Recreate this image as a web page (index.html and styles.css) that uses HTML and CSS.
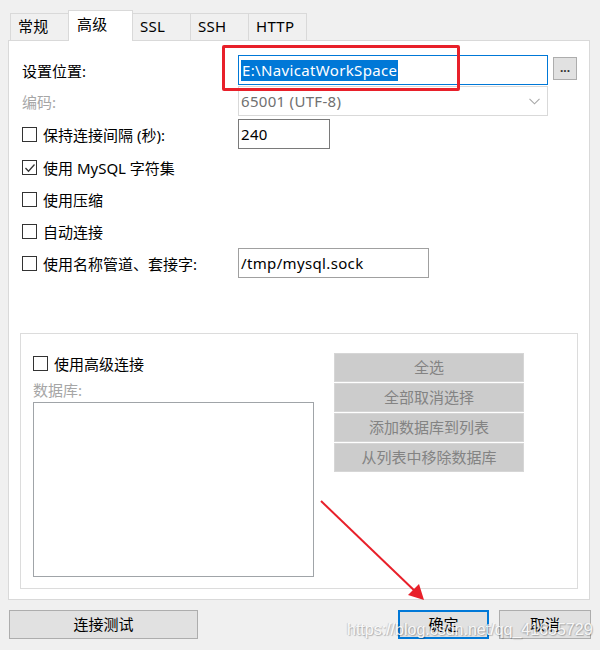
FILE: index.html
```html
<!DOCTYPE html>
<html lang="zh-CN">
<head>
<meta charset="utf-8">
<title>Navicat 连接属性</title>
<link rel="stylesheet" href="styles.css">
</head>
<body>
<div class="dialog">
  <div class="tabs">
    <div class="tab">常规</div>
    <div class="tab active">高级</div>
    <div class="tab">SSL</div>
    <div class="tab">SSH</div>
    <div class="tab">HTTP</div>
  </div>
  <div class="panel">
    <div class="form">
      <div class="label">设置位置:</div>
      <div class="ctrl">
        <div class="field path"><span class="sel">E:\NavicatWorkSpace</span></div>
        <div class="browse">...</div>
      </div>

      <div class="label disabled">编码:</div>
      <div class="ctrl">
        <div class="select">65001 (UTF-8)
          <svg class="chev" width="11" height="7" viewBox="0 0 11 7"><polyline points="0.5,0.8 5.5,5.8 10.5,0.8" fill="none" stroke="#a8a8a8" stroke-width="1.1"/></svg>
        </div>
      </div>

      <div class="check"><span class="box"></span><span>保持连接间隔 (秒):</span></div>
      <div class="ctrl"><div class="field num">240</div></div>

      <div class="check wide"><span class="box"><svg width="12" height="12" viewBox="0 0 12 12"><polyline points="1.5,6 4.5,9.2 10.5,2.5" fill="none" stroke="#333" stroke-width="1.3"/></svg></span><span>使用 MySQL 字符集</span></div>

      <div class="check wide"><span class="box"></span><span>使用压缩</span></div>

      <div class="check wide"><span class="box"></span><span>自动连接</span></div>

      <div class="check"><span class="box"></span><span>使用名称管道、套接字:</span></div>
      <div class="ctrl"><div class="field sock">/tmp/mysql.sock</div></div>
    </div>

    <div class="group">
      <div class="group-left">
        <div class="check adv"><span class="box"></span><span>使用高级连接</span></div>
        <div class="db-label">数据库:</div>
        <div class="listbox"></div>
      </div>
      <div class="group-right">
        <div class="gbtn">全选</div>
        <div class="gbtn">全部取消选择</div>
        <div class="gbtn">添加数据库到列表</div>
        <div class="gbtn">从列表中移除数据库</div>
      </div>
    </div>
  </div>
  <div class="footer">
    <div class="btn test">连接测试</div>
    <div class="footer-right">
      <div class="btn ok">确定</div>
      <div class="btn cancel">取消</div>
    </div>
  </div>
</div>

<div class="annot-box"></div>
<svg class="annot-arrow" width="600" height="650" viewBox="0 0 600 650">
  <line x1="321" y1="501" x2="418" y2="594" stroke="#e8202a" stroke-width="2"/>
  <polygon points="424,600 408,595 419,584" fill="#e8202a"/>
</svg>
<div class="watermark">https://blog.csdn.net/qq_41655729</div>
</body>
</html>
```

FILE: styles.css
```css
html, body {
  margin: 0;
  padding: 0;
}
body {
  width: 600px;
  height: 650px;
  background: #f0f0f0;
  font-family: "Noto Sans", "Noto Sans CJK SC", sans-serif;
  font-size: 15px;
  color: #000;
  position: relative;
  overflow: hidden;
}

.tabs {
  display: flex;
  align-items: flex-start;
  padding: 13px 0 0 10px;
  height: 27px;
}
.tab {
  box-sizing: border-box;
  width: 59px;
  height: 27px;
  margin-right: -1px;
  border: 1px solid #d9d9d9;
  border-bottom: none;
  background: #f0f0f0;
  padding-left: 7px;
  line-height: 25px;
  white-space: nowrap;
  letter-spacing: 0.3px;
}
.tab.active {
  position: relative;
  z-index: 2;
  width: 65px;
  height: 31px;
  margin-top: -3px;
  background: #fff;
  padding-left: 8px;
  line-height: 26px;
}

.panel {
  box-sizing: border-box;
  margin-left: 8px;
  width: 582px;
  height: 560px;
  border: 1px solid #d9d9d9;
  background: #fff;
}

.form {
  display: grid;
  grid-template-columns: 216px 1fr;
  grid-template-rows: 30px 32px 34px 33px 31px 32px 32px;
  align-items: center;
  padding: 14px 0 0 13px;
}
.label {
  white-space: nowrap;
}
.label.disabled {
  color: #a6a6a6;
}
.ctrl {
  display: flex;
  align-items: center;
}
.field {
  box-sizing: border-box;
  height: 30px;
  border: 1px solid #7a7a7a;
  background: #fff;
  padding-left: 2px;
  display: flex;
  align-items: center;
  white-space: nowrap;
  letter-spacing: 0.35px;
}
.field.path {
  width: 310px;
  border-color: #0078d7;
}
.sel {
  background: #0078d7;
  color: #fff;
  line-height: 21px;
  padding: 0 1px;
}
.browse {
  box-sizing: border-box;
  width: 24px;
  height: 23px;
  margin: -3px 0 0 5px;
  background: #e1e1e1;
  border: 1px solid #adadad;
  font-size: 12px;
  line-height: 20px;
  text-align: center;
  font-weight: bold;
  color: #333;
}
.select {
  box-sizing: border-box;
  width: 310px;
  height: 30px;
  border: 1px solid #d9d9d9;
  background: #fff;
  color: #707070;
  padding-left: 2px;
  display: flex;
  align-items: center;
  letter-spacing: 0.3px;
}
.chev {
  margin-left: auto;
  margin-right: 7px;
}
.field.num {
  width: 92px;
}
.field.sock {
  width: 191px;
  border-color: #a0a0a0;
}

.check {
  display: flex;
  align-items: center;
  white-space: nowrap;
}
.check.wide {
  grid-column: 1 / -1;
}
.box {
  box-sizing: border-box;
  width: 15px;
  height: 15px;
  border: 1px solid #333;
  background: #fff;
  margin-right: 6px;
  display: flex;
  align-items: center;
  justify-content: center;
  flex: none;
}

.group {
  box-sizing: border-box;
  display: flex;
  gap: 20px;
  width: 558px;
  margin: 54px 0 0 11px;
  border: 1px solid #dcdcdc;
  padding: 19px 0 11px 12px;
}
.group-left {
  display: flex;
  flex-direction: column;
  width: 281px;
}
.check.adv {
  height: 21px;
}
.db-label {
  height: 22px;
  margin-top: 6px;
  line-height: 20px;
  color: #a6a6a6;
}
.listbox {
  box-sizing: border-box;
  height: 175px;
  border: 1px solid #a0a4a8;
  background: #fff;
}
.group-right {
  display: flex;
  flex-direction: column;
  width: 190px;
}
.gbtn {
  box-sizing: border-box;
  height: 29px;
  margin-bottom: 1px;
  background: #cccccc;
  border: 1px solid #d6d6d6;
  color: #838383;
  text-align: center;
  line-height: 26px;
}

.footer {
  display: flex;
  justify-content: space-between;
  margin-top: 10px;
  padding: 0 9px 0 9px;
}
.footer-right {
  display: flex;
  gap: 10px;
}
.btn {
  box-sizing: border-box;
  height: 29px;
  background: #e1e1e1;
  border: 1px solid #adadad;
  text-align: center;
  line-height: 26px;
}
.btn.test {
  width: 189px;
}
.btn.ok {
  width: 91px;
  border: 2px solid #0078d7;
  line-height: 24px;
}
.btn.cancel {
  width: 92px;
}

.annot-box {
  position: absolute;
  left: 222px;
  top: 45px;
  width: 238px;
  height: 46px;
  box-sizing: border-box;
  border: 3px solid #e8202a;
  border-radius: 2px;
  pointer-events: none;
}
.annot-arrow {
  position: absolute;
  left: 0;
  top: 0;
  pointer-events: none;
}
.watermark {
  position: absolute;
  left: 347px;
  top: 621px;
  font-family: "Liberation Sans", Arial, sans-serif;
  font-size: 16px;
  line-height: 18px;
  color: rgba(255, 255, 255, 0.9);
  text-shadow: 1px 1px 1px rgba(0, 0, 0, 0.25), -1px 0 1px rgba(0, 0, 0, 0.15);
  white-space: nowrap;
  pointer-events: none;
}
```
